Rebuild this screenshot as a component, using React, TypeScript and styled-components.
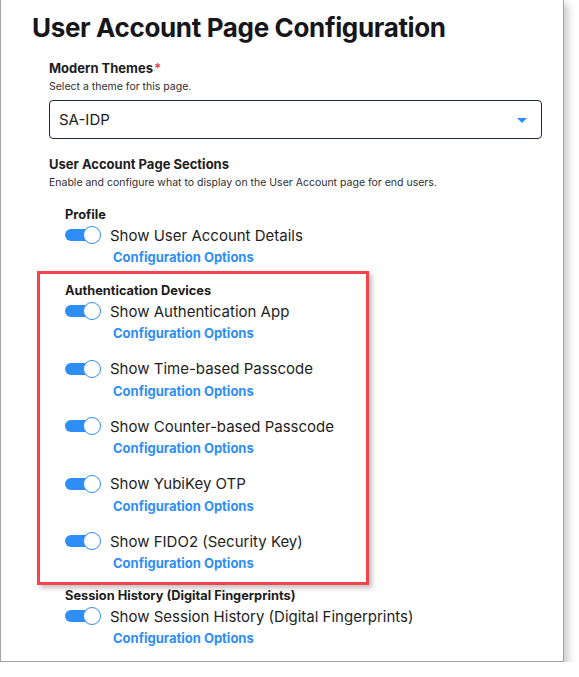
import styled, { createGlobalStyle } from 'styled-components';

const GlobalStyle = createGlobalStyle`
  html, body {
    margin: 0;
    padding: 0;
    background: #fff;
  }
  body {
    font-family: Inter, 'Noto Sans', sans-serif;
    color: #1b1b1f;
  }
`;

const StyledFrame = styled.div`
  width: 564px;
  height: 662px;
  box-sizing: border-box;
  border: 1px solid #a3a3a3;
  border-top: none;
  background: #fff;
  box-shadow: 4px 4px 8px rgba(0, 0, 0, 0.22);
  padding: 12px 0 0 31px;
`;

const StyledTitle = styled.h1`
  margin: 0;
  font-size: 26px;
  font-weight: 700;
  letter-spacing: -0.35px;
  line-height: 32px;
  color: #16161a;
`;

const StyledForm = styled.div`
  padding: 15px 0 0 17px;
  width: 493px;
`;

const StyledLabel = styled.div`
  font-size: 13px;
  font-weight: 700;
  line-height: 18px;
  color: #1d1d21;
`;

const StyledRequired = styled.span`
  color: #e8474f;
  margin-left: 1px;
`;

const StyledHint = styled.div`
  font-size: 10.5px;
  line-height: 14px;
  margin-top: 3px;
  color: #2d2d33;
`;

const StyledSelect = styled.div`
  margin-top: 6px;
  height: 39px;
  box-sizing: border-box;
  border: 1px solid #1c2b3b;
  border-radius: 4px;
  display: flex;
  align-items: center;
  justify-content: space-between;
  padding: 0 14px 0 9px;
  font-size: 15px;
  color: #222;
`;

const StyledCaret = styled.span`
  width: 0;
  height: 0;
  border-left: 5px solid transparent;
  border-right: 5px solid transparent;
  border-top: 5px solid #2f8ef5;
  margin-top: 2px;
`;

const StyledSections = styled.div`
  margin-top: 16px;
`;

const StyledGroupList = styled.div`
  display: flex;
  flex-direction: column;
  margin-top: 17px;
  padding-left: 16px;
`;

const StyledGroup = styled.div<{ $highlight?: boolean }>`
  display: flex;
  flex-direction: column;
  ${(p) =>
    p.$highlight &&
    `
    margin: 5px 0 3px -28px;
    padding: 9px 0 10px 25px;
    width: 301px;
    border: 3px solid #f5444b;
    box-shadow: 3px 3px 5px rgba(0, 0, 0, 0.25);
  `}
`;

const StyledGroupHead = styled.div`
  font-size: 12.8px;
  font-weight: 700;
  line-height: 16px;
  color: #1d1d21;
  margin-bottom: 1px;
`;

const StyledItems = styled.div`
  display: flex;
  flex-direction: column;
  gap: 15.5px;
`;

const StyledOption = styled.div`
  display: flex;
  flex-direction: column;
`;

const StyledToggleRow = styled.div`
  display: flex;
  align-items: center;
  gap: 9px;
  height: 22px;
`;

const StyledToggle = styled.span`
  position: relative;
  display: inline-block;
  width: 36px;
  height: 18px;
  flex-shrink: 0;

  &::before {
    content: '';
    position: absolute;
    left: 0;
    top: 3px;
    width: 32px;
    height: 12px;
    border-radius: 6px;
    background: #2f8ef5;
  }

  &::after {
    content: '';
    position: absolute;
    right: 0;
    top: 0;
    width: 16px;
    height: 16px;
    border-radius: 50%;
    background: #fff;
    border: 1px solid #2f8ef5;
  }
`;

const StyledToggleLabel = styled.span`
  font-size: 15px;
  color: #1e1e22;
  white-space: nowrap;
`;

const StyledLink = styled.a`
  margin: 2px 0 0 48px;
  font-size: 13px;
  font-weight: 700;
  line-height: 18px;
  color: #2f8ef5;
  text-decoration: none;
`;

type Section = {
  title: string;
  items: string[];
  highlight?: boolean;
};

const sections: Section[] = [
  { title: 'Profile', items: ['Show User Account Details'] },
  {
    title: 'Authentication Devices',
    highlight: true,
    items: [
      'Show Authentication App',
      'Show Time-based Passcode',
      'Show Counter-based Passcode',
      'Show YubiKey OTP',
      'Show FIDO2 (Security Key)',
    ],
  },
  {
    title: 'Session History (Digital Fingerprints)',
    items: ['Show Session History (Digital Fingerprints)'],
  },
];

export default function App() {
  return (
    <>
      <GlobalStyle />
      <StyledFrame>
        <StyledTitle>User Account Page Configuration</StyledTitle>
        <StyledForm>
          <StyledLabel>
            Modern Themes<StyledRequired>*</StyledRequired>
          </StyledLabel>
          <StyledHint>Select a theme for this page.</StyledHint>
          <StyledSelect>
            SA-IDP
            <StyledCaret />
          </StyledSelect>
          <StyledSections>
            <StyledLabel>User Account Page Sections</StyledLabel>
            <StyledHint>Enable and configure what to display on the User Account page for end users.</StyledHint>
          </StyledSections>
          <StyledGroupList>
            {sections.map((s) => (
              <StyledGroup key={s.title} $highlight={s.highlight}>
                <StyledGroupHead>{s.title}</StyledGroupHead>
                <StyledItems>
                  {s.items.map((item) => (
                    <StyledOption key={item}>
                      <StyledToggleRow>
                        <StyledToggle />
                        <StyledToggleLabel>{item}</StyledToggleLabel>
                      </StyledToggleRow>
                      <StyledLink href="#">Configuration Options</StyledLink>
                    </StyledOption>
                  ))}
                </StyledItems>
              </StyledGroup>
            ))}
          </StyledGroupList>
        </StyledForm>
      </StyledFrame>
    </>
  );
}
